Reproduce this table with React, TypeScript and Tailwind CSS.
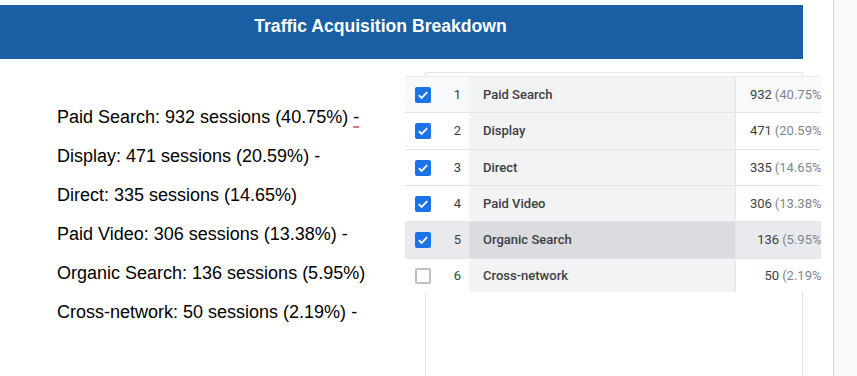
import React from "react";

type Row = {
  rank: number;
  name: string;
  sessions: number;
  pct: string;
  checked: boolean;
  h: string;
  tone: "first" | "plain" | "hover";
};

const rows: Row[] = [
  { rank: 1, name: "Paid Search", sessions: 932, pct: "40.75%", checked: true, h: "h-[36px]", tone: "first" },
  { rank: 2, name: "Display", sessions: 471, pct: "20.59%", checked: true, h: "h-[37px]", tone: "plain" },
  { rank: 3, name: "Direct", sessions: 335, pct: "14.65%", checked: true, h: "h-[36px]", tone: "plain" },
  { rank: 4, name: "Paid Video", sessions: 306, pct: "13.38%", checked: true, h: "h-[36px]", tone: "plain" },
  { rank: 5, name: "Organic Search", sessions: 136, pct: "5.95%", checked: true, h: "h-[37px]", tone: "hover" },
  { rank: 6, name: "Cross-network", sessions: 50, pct: "2.19%", checked: false, h: "h-[33px]", tone: "plain" },
];

const lines = [
  { text: "Paid Search: 932 sessions (40.75%)", dash: true, squiggle: true },
  { text: "Display: 471 sessions (20.59%)", dash: true },
  { text: "Direct: 335 sessions (14.65%)", dash: false },
  { text: "Paid Video: 306 sessions (13.38%)", dash: true },
  { text: "Organic Search: 136 sessions (5.95%)", dash: false },
  { text: "Cross-network: 50 sessions (2.19%)", dash: true },
];

const Checkbox: React.FC<{ checked: boolean }> = ({ checked }) =>
  checked ? (
    <span className="flex h-4 w-4 items-center justify-center rounded-[2px] bg-[#1a73e8]">
      <svg width="16" height="16" viewBox="0 0 16 16">
        <polyline points="3.8,8.2 6.6,11 12.2,5.2" fill="none" stroke="white" strokeWidth="1.8" />
      </svg>
    </span>
  ) : (
    <span className="h-4 w-4 rounded-[2px] border-2 border-[#bdc1c6] bg-white" />
  );

const TableRow: React.FC<{ row: Row; last: boolean }> = ({ row, last }) => {
  const side =
    row.tone === "hover" ? "bg-[#e8eaed]" : row.tone === "first" ? "bg-[#f8f9fa]" : "bg-white";
  const mid = row.tone === "hover" ? "bg-[#dadce0]" : "bg-[#f1f3f4]";
  return (
    <div className={`flex ${row.h} ${side} ${last ? "" : "border-b border-[#e3e5e8]"}`}>
      <div className="flex w-[64px] shrink-0 items-center pl-[10px]">
        <Checkbox checked={row.checked} />
        <span className="w-[30px] text-right text-[13px] text-[#3c4043]">{row.rank}</span>
      </div>
      <div className={`flex w-[266px] shrink-0 items-center pl-[14px] text-[13px] font-medium text-[#3c4043] ${mid}`}>
        {row.name}
      </div>
      <div className="flex w-[91px] shrink-0 items-center justify-end border-l border-[#e3e5e8] text-[13px] whitespace-nowrap">
        <span className="text-[#3c4043]">{row.sessions}</span>
        <span className="ml-[3px] text-[#80868b]">({row.pct})</span>
      </div>
    </div>
  );
};

const App: React.FC = () => {
  return (
    <div className="flex h-[376px] w-[857px] overflow-hidden bg-white font-['Liberation_Sans',Arial,sans-serif]">
      <div className="flex w-[833px] shrink-0 flex-col pt-[5px]">
        <div className="h-[54px] w-[803px] bg-[#1a5fa3] pr-[42px] pt-[11px] text-center text-[17.6px] leading-[20px] font-bold text-white">
          Traffic Acquisition Breakdown
        </div>

        <div className="flex flex-1">
          <div className="w-[425px] shrink-0 pl-[57px] pt-[39px]">
            {lines.map((l) => (
              <p key={l.text} className="text-[18px] leading-[38.9px] whitespace-nowrap text-black">
                {l.text}
                {l.dash && (
                  <>
                    {" "}
                    <span
                      className={
                        l.squiggle ? "underline decoration-[#e57373] decoration-[1.5px] underline-offset-[3px]" : ""
                      }
                    >
                      -
                    </span>
                  </>
                )}
              </p>
            ))}
          </div>

          <div className="mt-[13px] w-[378px] shrink-0 border-x border-t border-[#e3e5e8]">
            <div className="-ml-[21px] mt-[3px] w-[416px] overflow-hidden border-t border-[#e8eaed] font-['Roboto',sans-serif]">
              {rows.map((r, i) => (
                <TableRow key={r.rank} row={r} last={i === rows.length - 1} />
              ))}
            </div>
          </div>
        </div>
      </div>

      <div className="flex-1 border-l border-[#d2d4d7] bg-[#f8f9fb]" />
    </div>
  );
};

export default App;
